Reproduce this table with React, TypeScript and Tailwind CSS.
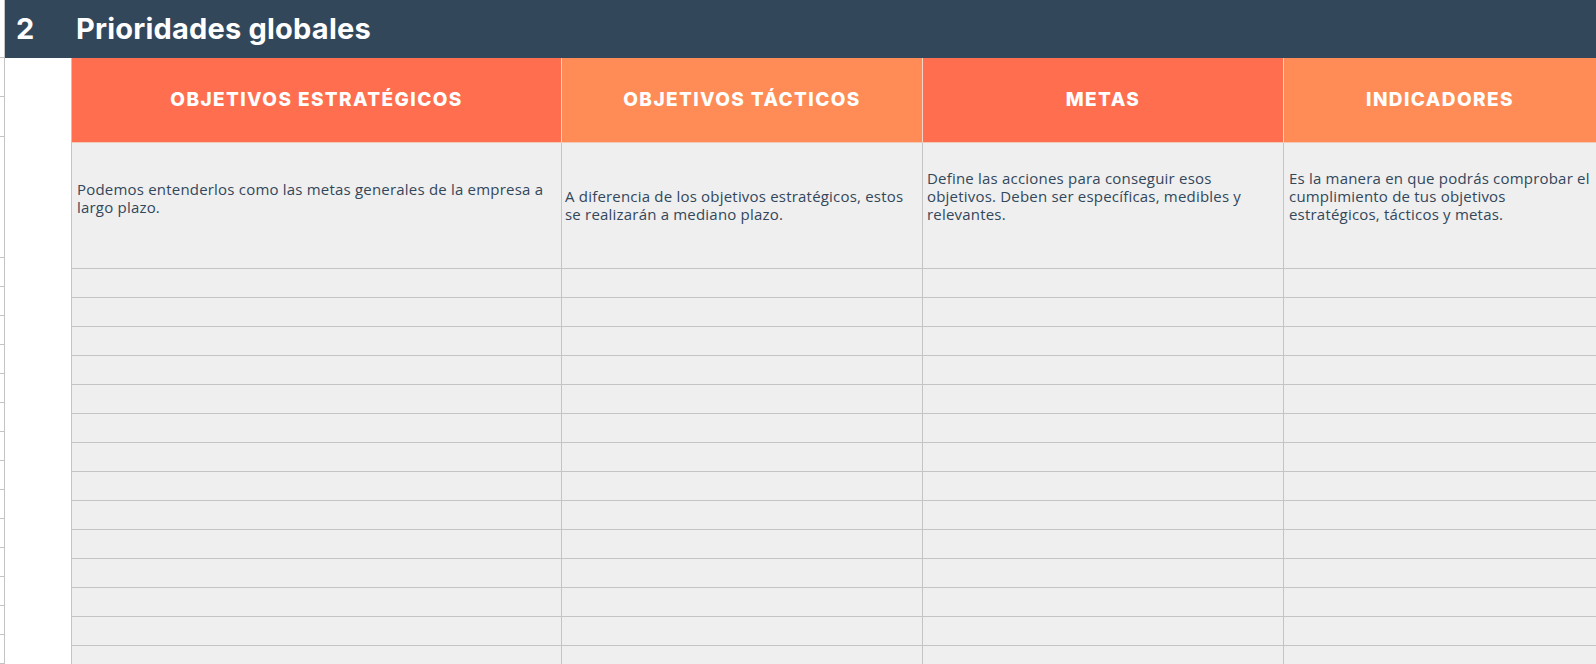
import React from "react";

const headers = [
  { label: "OBJETIVOS ESTRATÉGICOS", bg: "bg-[#ff6e4f]" },
  { label: "OBJETIVOS TÁCTICOS", bg: "bg-[#ff8b56]" },
  { label: "METAS", bg: "bg-[#ff6e4f]" },
  { label: "INDICADORES", bg: "bg-[#ff8b56]" },
];

// descriptions keep the sheet's own line breaks
const descriptions = [
  { lines: ["Podemos entenderlos como las metas generales de la empresa a", "largo plazo."], pad: "pt-[37px] pl-[5px]" },
  { lines: ["A diferencia de los objetivos estratégicos, estos", "se realizarán a mediano plazo."], pad: "pt-[44px] pl-[3px]" },
  { lines: ["Define las acciones para conseguir esos", "objetivos. Deben ser específicas, medibles y", "relevantes."], pad: "pt-[26px] pl-[4px]" },
  { lines: ["Es la manera en que podrás comprobar el", "cumplimiento de tus objetivos", "estratégicos, tácticos y metas."], pad: "pt-[26px] pl-[5px]" },
];

const emptyRows = Array.from({ length: 14 });

export default function App() {
  return (
    <div className="w-[1596px] h-[664px] overflow-hidden bg-white flex font-['Open_Sans',sans-serif]">
      {/* sliver of the previous sheet column */}
      <div className="w-[5px] shrink-0 flex flex-col border-r border-[#c4c4c4]">
        <div className="h-[60px] border-b border-[#c4c4c4]" />
        <div className="h-[41px] border-b border-[#c4c4c4]" />
        <div className="h-[42px] border-b border-[#c4c4c4]" />
        <div className="h-[126px] border-b border-[#c4c4c4]" />
        {emptyRows.map((_, i) => (
          <div key={i} className="h-[29px] shrink-0 border-b border-[#c4c4c4]" />
        ))}
      </div>

      <div className="flex-1 flex flex-col min-w-0">
        <div className="h-[58px] shrink-0 bg-[#33475b] flex items-center text-white font-['Inter',sans-serif] font-bold">
          <span className="w-[71px] pl-[11px] text-[29px]">2</span>
          <span className="text-[29px] tracking-[0.2px]">Prioridades globales</span>
        </div>

        <div className="flex flex-1 min-h-0">
          <div className="w-[67px] shrink-0 border-r border-[#c4c4c4] bg-white" />

          <div className="flex-1 grid grid-cols-[490px_361px_361px_1fr] auto-rows-min content-start">
            {headers.map((h, i) => (
              <div
                key={h.label}
                className={`${h.bg} h-[85px] flex items-center justify-center border-b border-[#f2c9b6] ${i < 3 ? "border-r border-r-[#f4d6c8]" : ""}`}
              >
                <span className="text-white font-['Inter',sans-serif] font-extrabold text-[19px] tracking-[1.4px]">{h.label}</span>
              </div>
            ))}

            {descriptions.map((d, i) => (
              <div
                key={i}
                className={`h-[126px] bg-[#efefef] border-b border-[#c4c4c4] ${i < 3 ? "border-r" : ""} ${d.pad} text-[15px] leading-[18px] tracking-[0.2px] text-[#33475b]`}
              >
                {d.lines.map((l) => (
                  <div key={l} className="whitespace-nowrap">{l}</div>
                ))}
              </div>
            ))}

            {emptyRows.map((_, r) =>
              [0, 1, 2, 3].map((c) => (
                <div
                  key={`${r}-${c}`}
                  className={`h-[29px] bg-[#efefef] border-b border-[#c4c4c4] ${c < 3 ? "border-r" : ""}`}
                />
              ))
            )}
          </div>
        </div>
      </div>
    </div>
  );
}
